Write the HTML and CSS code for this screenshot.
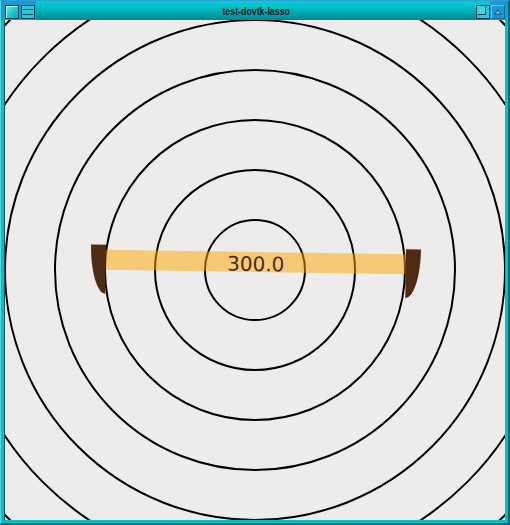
FILE: index.html
```html
<!DOCTYPE html>
<html>
<head>
<meta charset="utf-8">
<title>test-dovtk-lasso</title>
<link rel="stylesheet" href="styles.css">
</head>
<body>
<div class="window">
  <div class="titlebar">
    <div class="tb-left">
      <span class="btn btn-menu"></span>
      <span class="btn btn-shade"><i></i><i></i></span>
    </div>
    <div class="tb-title">
      <span class="title-wrap"><span class="title-text">test-dovtk-lasso</span></span>
      <span class="btn btn-max"><i></i></span>
    </div>
    <div class="tb-right">
      <span class="btn btn-close"><svg class="tri" width="8" height="6" viewBox="0 0 8 6"><path d="M4 0.8 L7.2 5.2 L0.8 5.2 Z"/></svg></span>
    </div>
  </div>
  <div class="body">
    <div class="canvas">
      <svg class="drawing" width="500" height="500" viewBox="0 0 500 500">
        <g class="rings">
          <circle cx="250" cy="250" r="50"/>
          <circle cx="250" cy="250" r="100"/>
          <circle cx="250" cy="250" r="150"/>
          <circle cx="250" cy="250" r="200"/>
          <circle cx="250" cy="250" r="250"/>
          <circle cx="250" cy="250" r="300"/>
          <circle cx="250" cy="250" r="350"/>
        </g>
        <g class="ruler" transform="rotate(0.86 250.8 242)">
          <rect class="bar" x="100.8" y="232" width="300" height="20"/>
          <path class="handle" d="M100.8 227 L85.8 227 A15 49 0 0 0 100.8 276 Z"/>
          <path class="handle" d="M400.8 227 L415.8 227 A15 49 0 0 1 400.8 276 Z"/>
          <text class="label" x="250.8" y="251">300.0</text>
        </g>
      </svg>
    </div>
  </div>
</div>
</body>
</html>
```

FILE: styles.css
```css
html, body {
  margin: 0;
  padding: 0;
}
body {
  width: 510px;
  height: 525px;
  overflow: hidden;
  background: #00c2ca;
}
.window {
  box-sizing: border-box;
  width: 510px;
  height: 525px;
  display: flex;
  flex-direction: column;
  background: #00c2ca;
  border-left: 1px solid #4fdbe2;
  border-top: 1px solid #2f9fd6;
  border-right: 2px solid #006a72;
  border-bottom: 2px solid #006a72;
}
.titlebar {
  flex: none;
  height: 19px;
  display: flex;
}
.tb-left {
  box-sizing: border-box;
  width: 35px;
  background: #1a99d4;
  display: flex;
  gap: 2px;
  padding: 4px 0 0 4px;
}
.tb-title {
  flex: 1;
  display: flex;
  align-items: flex-start;
  background: linear-gradient(#00d0d8 0%, #00b4bc 50%, #008890 100%);
}
.title-wrap {
  flex: 1;
  display: flex;
  justify-content: center;
  padding-top: 4px;
}
.title-text {
  display: inline-block;
  font-family: "Liberation Sans", sans-serif;
  font-weight: bold;
  font-size: 11px;
  line-height: 12px;
  color: #001a1c;
  white-space: nowrap;
  transform: scaleX(0.8);
}
.tb-right {
  box-sizing: border-box;
  width: 18px;
  background: #1a99d4;
  padding: 4px 3px 0 1px;
}
.btn {
  box-sizing: border-box;
  display: block;
  width: 14px;
  height: 14px;
  flex: none;
}
.btn-menu {
  border: 1px solid #0d3f4c;
  background: linear-gradient(135deg, #7af0f4 0%, #20d0d8 45%, #00a8b4 100%);
  box-shadow: inset 1px 1px 0 #b8f8fa;
}
.btn-shade {
  border: 1px solid #0d3f4c;
  background: #22ccd6;
  display: flex;
  flex-direction: column;
  justify-content: space-evenly;
  padding: 0 1px;
}
.btn-shade i {
  display: block;
  height: 1px;
  background: #0d3f4c;
}
.btn-max {
  margin-top: 4px;
  border: 1px solid #0d3f4c;
  background: #22ccd6;
  position: relative;
}
.btn-max i {
  position: absolute;
  left: 1px;
  top: 1px;
  width: 7px;
  height: 7px;
  border-right: 1px solid #0d3f4c;
  border-bottom: 1px solid #0d3f4c;
  background: #3ad8e0;
}
.btn-close {
  background: #1b97d2;
  border-top: 1px solid #55c4ee;
  border-left: 1px solid #55c4ee;
  border-right: 1px solid #106a98;
  border-bottom: 1px solid #106a98;
  display: flex;
  align-items: center;
  justify-content: center;
}
.tri {
  display: block;
}
.tri path {
  fill: #6fd0f2;
  stroke: #0b4a6a;
  stroke-width: 1;
}
.body {
  flex: 1;
  display: flex;
  padding: 0 3px 3px 3px;
}
.canvas {
  width: 500px;
  height: 500px;
  border-left: 1px solid #084c52;
  background: #edeceb;
  overflow: hidden;
}
.drawing {
  display: block;
}
.rings circle {
  fill: none;
  stroke: #000;
  stroke-width: 2;
}
.bar {
  fill: rgba(255, 165, 0, 0.5);
}
.handle {
  fill: #502b14;
}
.label {
  font-family: "DejaVu Sans", sans-serif;
  font-size: 20px;
  fill: #4a2a10;
  text-anchor: middle;
}
```
